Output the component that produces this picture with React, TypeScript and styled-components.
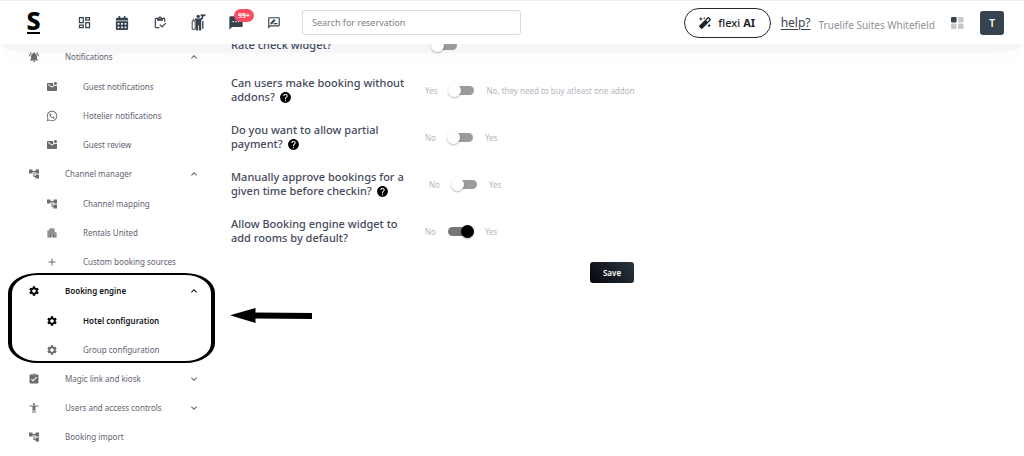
import React from "react";
import styled, { createGlobalStyle } from "styled-components";
import {
  MdAccessibility,
  MdAccountTree,
  MdAdd,
  MdApartment,
  MdAssignmentTurnedIn,
  MdExpandLess,
  MdExpandMore,
  MdHelp,
  MdMarkEmailUnread,
  MdNotificationsActive,
  MdOutlineDashboard,
  MdOutlineInventory,
  MdOutlineRateReview,
  MdSettings,
  MdSms,
} from "react-icons/md";
import { FaCalendarAlt, FaMagic, FaWhatsapp } from "react-icons/fa";

const GlobalStyle = createGlobalStyle`
  * { box-sizing: border-box; }
  body {
    margin: 0;
    background: #fff;
    font-family: "Noto Sans", "Open Sans", sans-serif;
    color: #4a4f60;
  }
  button, input { font-family: inherit; }
  ul { list-style: none; margin: 0; padding: 0; }
`;

const Page = styled.div`
  min-height: 100vh;
  display: flex;
  flex-direction: column;
`;

const Header = styled.header`
  height: 44px;
  flex: none;
  display: flex;
  align-items: center;
  padding: 0 20px 0 27px;
  border-top: 1px solid #eeeef0;
  background: #fff;
`;

const Logo = styled.a`
  width: 13px;
  display: flex;
  justify-content: center;
  padding-bottom: 3px;
  border-bottom: 2px solid #000;
  color: #000;
  font-size: 25px;
  font-weight: 800;
  line-height: 18px;
  text-decoration: none;
`;

const Nav = styled.nav`
  display: flex;
  margin-left: 25px;
`;

const NavButton = styled.button`
  position: relative;
  width: 38px;
  height: 28px;
  display: flex;
  align-items: center;
  justify-content: center;
  padding: 0;
  border: 0;
  background: none;
  color: #36424d;
`;

const Badge = styled.span`
  position: absolute;
  top: 0;
  left: 17px;
  padding: 0 4px;
  border-radius: 7px;
  background: #fb4d60;
  color: #fff;
  font-size: 7px;
  font-weight: 700;
  line-height: 13px;
`;

const Search = styled.input`
  flex: 0 1 219px;
  min-width: 80px;
  height: 25px;
  margin-left: 9px;
  padding: 0 9px;
  border: 1px solid #d9dadd;
  border-radius: 3px;
  background: #fff;
  font-size: 9px;
  color: #4a4f60;
  &::placeholder { color: #7d7f86; opacity: 1; }
`;

const Account = styled.div`
  display: flex;
  align-items: center;
  margin-left: auto;
  white-space: nowrap;
`;

const AiButton = styled.button`
  width: 87px;
  height: 30px;
  display: flex;
  align-items: center;
  justify-content: center;
  gap: 7px;
  padding: 0;
  border: 1px solid #26282c;
  border-radius: 15px;
  background: #fff;
  color: #1d1f24;
  font-size: 11px;
  font-weight: 500;
`;

const HelpLink = styled.a`
  margin-left: 10px;
  color: #3a4150;
  font-size: 12px;
  text-underline-offset: 2px;
`;

const Property = styled.span`
  margin: 4px 0 0 8px;
  color: #909298;
  font-size: 10px;
`;

const AppsButton = styled.button`
  display: flex;
  margin-left: 16px;
  padding: 0;
  border: 0;
  background: none;
`;

const Avatar = styled.button`
  width: 24px;
  height: 24px;
  margin-left: 16px;
  padding: 0;
  border: 0;
  border-radius: 3px;
  background: #36424d;
  color: #fff;
  font-size: 10px;
  font-weight: 600;
`;

const Body = styled.div`
  position: relative;
  z-index: 0;
  flex: 1;
  display: flex;
  overflow: hidden;
  &::before {
    content: "";
    position: absolute;
    z-index: -1;
    inset: 0 0 auto;
    height: 9px;
    border-radius: 0 0 36px 36px / 0 0 9px 9px;
    background: #f6f6f9;
    box-shadow: 0 6px 14px rgba(40, 40, 60, 0.03);
  }
`;

const Sidebar = styled.nav`
  flex: 0 0 231px;
  margin-top: -2px;
`;

const Group = styled.li`
  position: relative;
`;

const SubList = styled.ul`
  padding: 1px 0 0;
`;

const Item = styled.a<{ $sub?: boolean; $active?: boolean }>`
  height: 29px;
  display: grid;
  grid-template-columns: ${(p) => (p.$sub ? "12px 1fr" : "12px 1fr 12px")};
  column-gap: 25px;
  align-items: center;
  padding: 0 31px 0 ${(p) => (p.$sub ? 46 : 28)}px;
  color: ${(p) => (p.$active ? "#111318" : "#5f6372")};
  font-size: 8px;
  font-weight: ${(p) => (p.$active ? 600 : 400)};
  text-decoration: none;
  white-space: nowrap;
  & > svg:first-child { color: ${(p) => (p.$active ? "#000" : "#6c6c6c")}; }
`;

const Highlight = styled.span`
  position: absolute;
  inset: -3px auto 1px 8px;
  width: 207px;
  border: solid #000;
  border-width: 2px 4px;
  border-radius: 30px / 20px;
  pointer-events: none;
`;

const Arrow = styled.svg`
  position: absolute;
  top: 32px;
  left: 230px;
`;

const Content = styled.main`
  flex: 1;
  min-width: 0;
  margin-top: -11px;
  padding-right: 31px;
`;

const Form = styled.form`
  display: flex;
  flex-direction: column;
  gap: 19px;
`;

const Setting = styled.div<{ $labelWidth: number; $short?: boolean }>`
  min-height: ${(p) => (p.$short ? 24 : 28)}px;
  display: grid;
  grid-template-columns: ${(p) => p.$labelWidth}px 1fr;
  align-items: center;
`;

const Question = styled.label`
  width: 184px;
  color: #454a5c;
  font-size: 11px;
  font-weight: 500;
  line-height: 14px;
  svg { margin-left: 1px; color: #000; vertical-align: -3px; }
`;

const Options = styled.div`
  display: flex;
  align-items: center;
  gap: 12px;
  color: #b4b6be;
  font-size: 8px;
`;

const Toggle = styled.input`
  appearance: none;
  width: 25px;
  height: 9px;
  display: flex;
  align-items: center;
  margin: 0;
  border-radius: 5px;
  background: #9b9b9b;
  &::after {
    content: "";
    flex: none;
    width: 13px;
    height: 13px;
    margin: 0 -1px;
    border-radius: 50%;
    background: #fff;
    box-shadow: 0 1px 2px rgba(0, 0, 0, 0.28);
  }
  &:checked { background: #777; justify-content: flex-end; }
  &:checked::after { background: #000; }
`;

const Save = styled.button`
  align-self: center;
  width: 44px;
  height: 21px;
  margin-top: -2px;
  padding: 0;
  border: 0;
  border-radius: 3px;
  background: linear-gradient(45deg, #05080b, #2b3640);
  color: #fff;
  font-size: 8px;
  font-weight: 600;
`;

const PorterIcon = () => (
  <svg width="15" height="17" viewBox="0 0 15 17" fill="currentColor" aria-hidden="true">
    <circle cx="7.200" cy="2.400" r="1.700" />
    <path d="M4 4.400h5.500l1.300-1V1.600h1.400v3L10.200 6.400V16.500H8v-5h-.8v5H5V6.400H4z" />
    <path d="M9.600.4h4.800v1.900H9.600z" />
    <path d="M1.200 6.800h3v8.500h-3zM2.700 4.800v2" fill="none" stroke="currentColor" strokeWidth="1" />
    <path d="M11 7h1.600v7.800H11z" opacity="0.85" />
  </svg>
);

const AppsIcon = () => (
  <svg width="13" height="12" viewBox="0 0 13 12" aria-hidden="true">
    <rect width="5.6" height="5.4" rx="1" fill="#36424d" />
    <rect x="7" width="5.6" height="5.4" rx="1" fill="#c9cace" />
    <rect y="6.6" width="5.6" height="5.4" rx="1" fill="#c9cace" />
    <rect x="7" y="6.6" width="5.6" height="5.4" rx="1" fill="#c9cace" />
  </svg>
);

type Entry = {
  label: string;
  icon: React.ReactNode;
  open?: boolean;
  closed?: boolean;
  active?: boolean;
  highlighted?: boolean;
  items?: { label: string; icon: React.ReactNode; active?: boolean }[];
};

const menu: Entry[] = [
  {
    label: "Notifications",
    icon: <MdNotificationsActive size={12} />,
    open: true,
    items: [
      { label: "Guest notifications", icon: <MdMarkEmailUnread size={12} /> },
      { label: "Hotelier notifications", icon: <FaWhatsapp size={12} /> },
      { label: "Guest review", icon: <MdMarkEmailUnread size={12} /> },
    ],
  },
  {
    label: "Channel manager",
    icon: <MdAccountTree size={12} />,
    open: true,
    items: [
      { label: "Channel mapping", icon: <MdAccountTree size={12} /> },
      { label: "Rentals United", icon: <MdApartment size={12} /> },
      { label: "Custom booking sources", icon: <MdAdd size={12} /> },
    ],
  },
  {
    label: "Booking engine",
    icon: <MdSettings size={12} />,
    open: true,
    active: true,
    highlighted: true,
    items: [
      { label: "Hotel configuration", icon: <MdSettings size={12} />, active: true },
      { label: "Group configuration", icon: <MdSettings size={12} /> },
    ],
  },
  { label: "Magic link and kiosk", icon: <MdAssignmentTurnedIn size={12} />, closed: true },
  { label: "Users and access controls", icon: <MdAccessibility size={12} />, closed: true },
  { label: "Booking import", icon: <MdAccountTree size={12} /> },
];

type SettingEntry = {
  id: string;
  question: string;
  help?: boolean;
  before?: string;
  after?: string;
  on?: boolean;
  short?: boolean;
  labelWidth: number;
};

const settings: SettingEntry[] = [
  { id: "rate", question: "Rate check widget?", short: true, labelWidth: 201 },
  {
    id: "addons",
    question: "Can users make booking without addons?",
    help: true,
    before: "Yes",
    after: "No, they need to buy atleast one addon",
    labelWidth: 194,
  },
  { id: "partial", question: "Do you want to allow partial payment?", help: true, before: "No", after: "Yes", labelWidth: 194 },
  {
    id: "approve",
    question: "Manually approve bookings for a given time before checkin?",
    help: true,
    before: "No",
    after: "Yes",
    labelWidth: 198,
  },
  {
    id: "widget",
    question: "Allow Booking engine widget to add rooms by default?",
    before: "No",
    after: "Yes",
    on: true,
    labelWidth: 194,
  },
];

export default function App() {
  return (
    <Page>
      <GlobalStyle />
      <Header>
        <Logo href="#">S</Logo>
        <Nav aria-label="Main">
          <NavButton aria-label="Dashboard"><MdOutlineDashboard size={15} /></NavButton>
          <NavButton aria-label="Calendar"><FaCalendarAlt size={14} /></NavButton>
          <NavButton aria-label="Tasks"><MdOutlineInventory size={14} /></NavButton>
          <NavButton aria-label="Front desk"><PorterIcon /></NavButton>
          <NavButton aria-label="Messages">
            <MdSms size={16} />
            <Badge>99+</Badge>
          </NavButton>
          <NavButton aria-label="Reviews"><MdOutlineRateReview size={14} /></NavButton>
        </Nav>
        <Search type="text" aria-label="Search for reservation" placeholder="Search for reservation" />
        <Account>
          <AiButton>
            <FaMagic size={12} />
            <span>flexi <b>AI</b></span>
          </AiButton>
          <HelpLink href="#">help?</HelpLink>
          <Property>Truelife Suites Whitefield</Property>
          <AppsButton aria-label="Apps"><AppsIcon /></AppsButton>
          <Avatar>T</Avatar>
        </Account>
      </Header>
      <Body>
        <Sidebar aria-label="Settings">
          <ul>
            {menu.map((entry) => (
              <Group key={entry.label}>
                <Item href="#" $active={entry.active}>
                  {entry.icon}
                  <span>{entry.label}</span>
                  {entry.open && <MdExpandLess size={12} />}
                  {entry.closed && <MdExpandMore size={12} />}
                </Item>
                {entry.items && (
                  <SubList>
                    {entry.items.map((item) => (
                      <li key={item.label}>
                        <Item href="#" $sub $active={item.active}>
                          {item.icon}
                          <span>{item.label}</span>
                        </Item>
                      </li>
                    ))}
                  </SubList>
                )}
                {entry.highlighted && (
                  <>
                    <Highlight />
                    <Arrow width="82" height="15" viewBox="0 0 82 15" aria-hidden="true">
                      <path d="M0 7.2 25.5 0v4.6L82 5v6l-56.500-.6V15z" />
                    </Arrow>
                  </>
                )}
              </Group>
            ))}
          </ul>
        </Sidebar>
        <Content>
          <Form onSubmit={(e) => e.preventDefault()}>
            {settings.map((s) => (
              <Setting key={s.id} $labelWidth={s.labelWidth} $short={s.short}>
                <Question htmlFor={s.id}>
                  {s.question} {s.help && <MdHelp size={13} />}
                </Question>
                <Options>
                  {s.before && <span>{s.before}</span>}
                  <Toggle id={s.id} type="checkbox" defaultChecked={s.on} />
                  {s.after && <span>{s.after}</span>}
                </Options>
              </Setting>
            ))}
            <Save type="submit">Save</Save>
          </Form>
        </Content>
      </Body>
    </Page>
  );
}
